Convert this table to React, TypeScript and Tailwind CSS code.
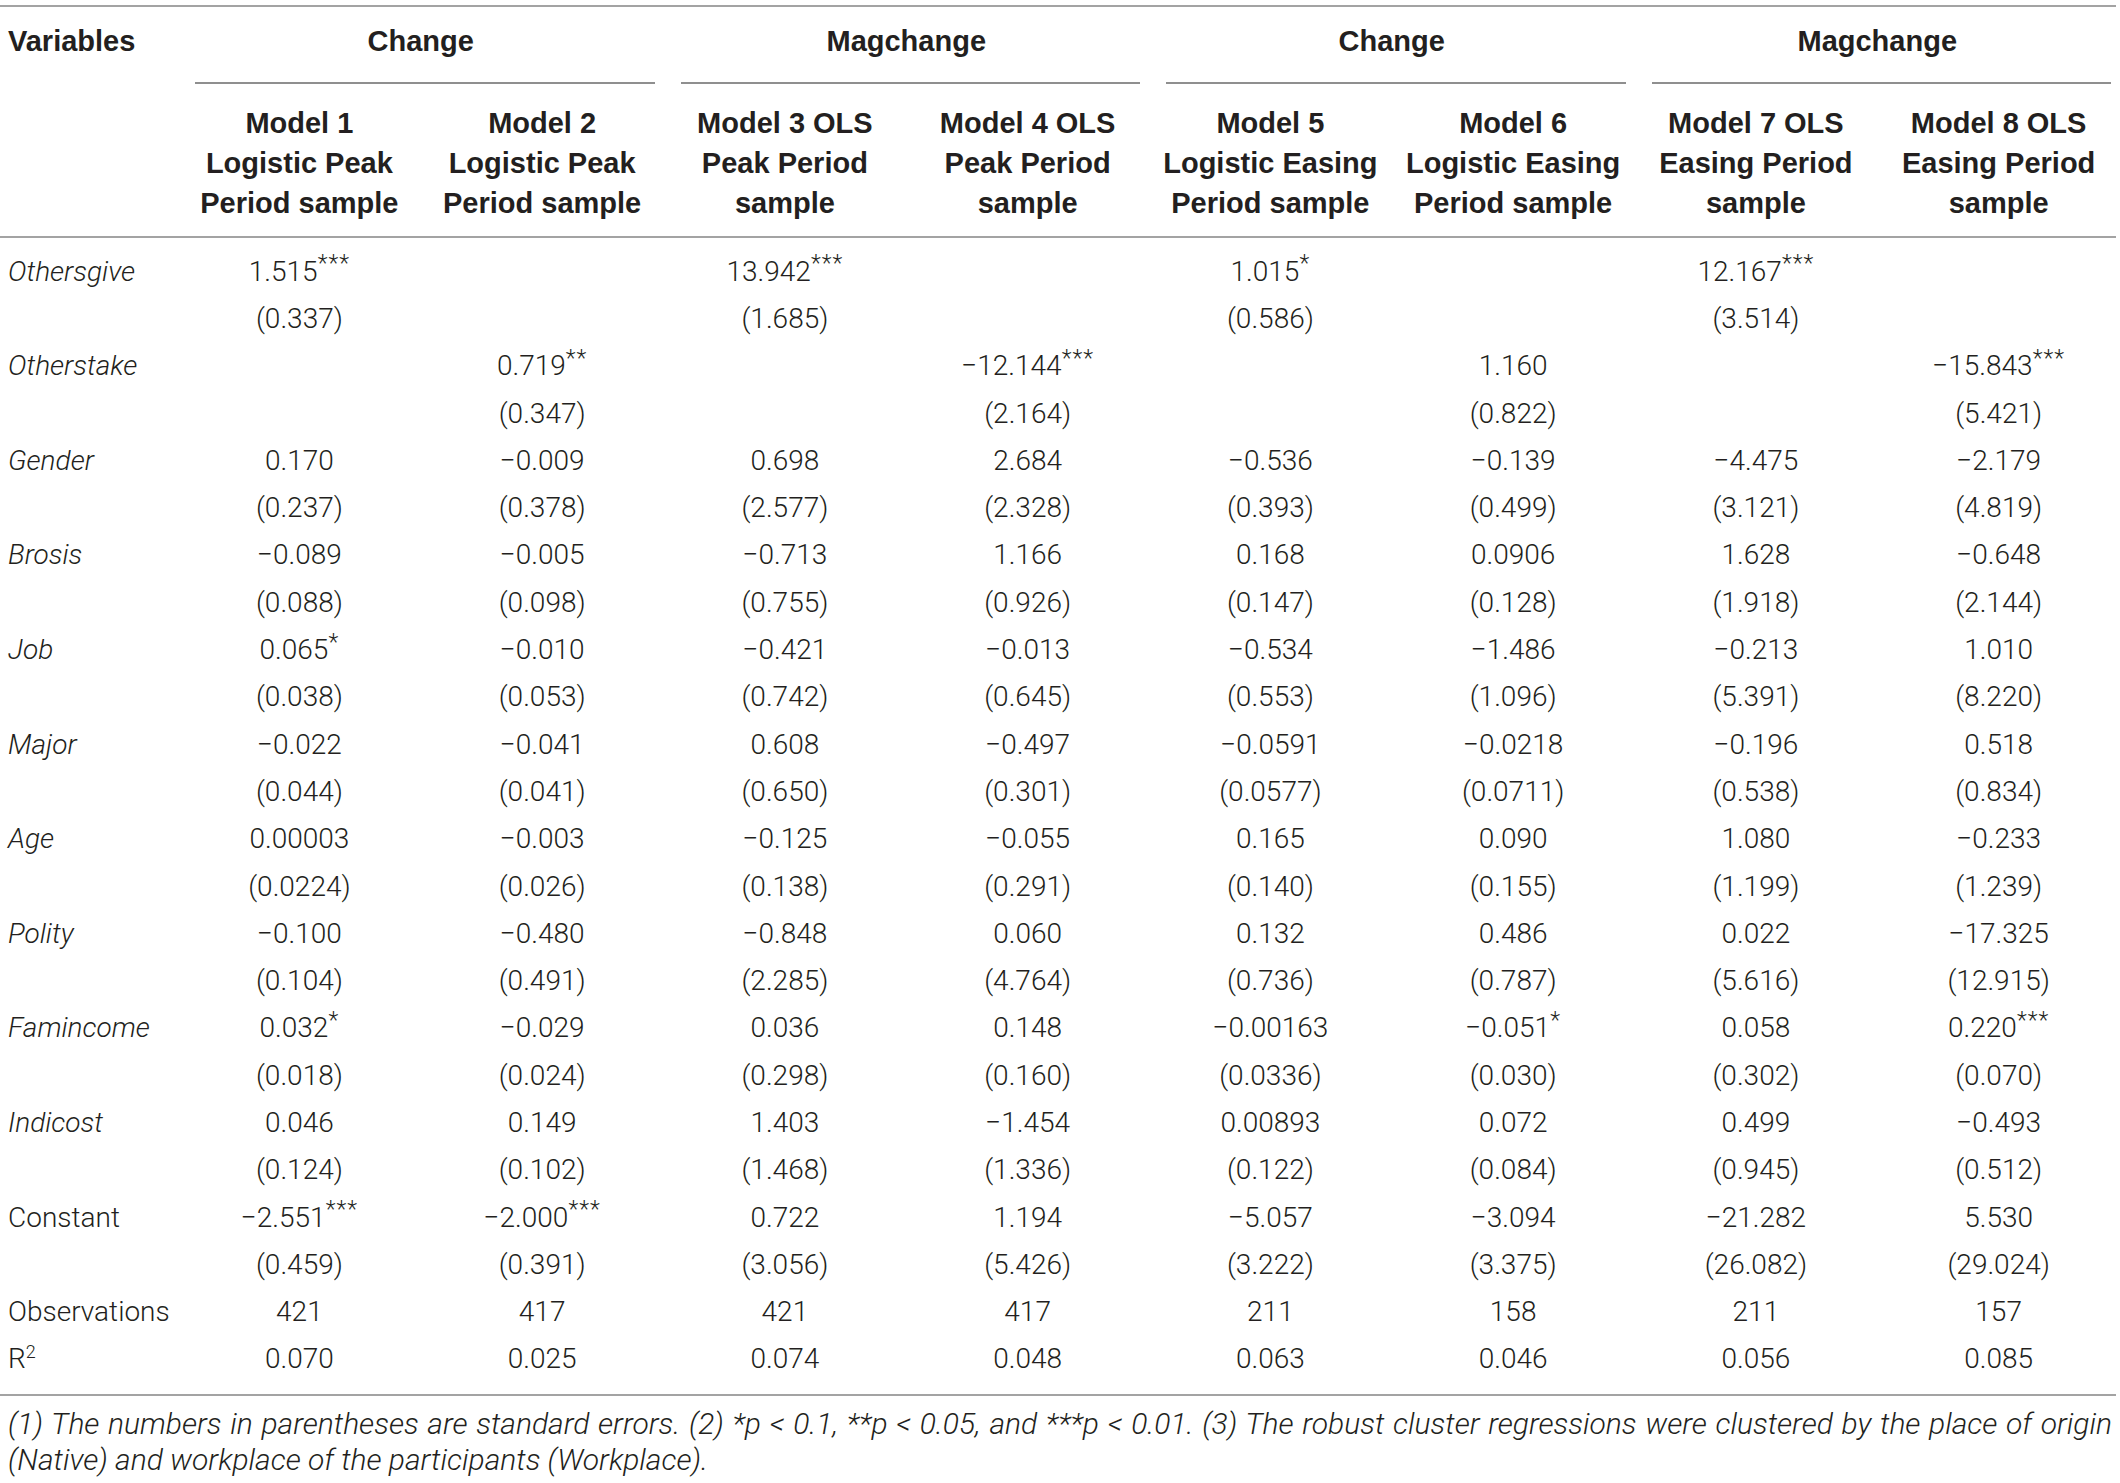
import React from "react";

const groups = ["Change", "Magchange", "Change", "Magchange"];

const models = [
  ["Model 1", "Logistic Peak", "Period sample"],
  ["Model 2", "Logistic Peak", "Period sample"],
  ["Model 3 OLS", "Peak Period", "sample"],
  ["Model 4 OLS", "Peak Period", "sample"],
  ["Model 5", "Logistic Easing", "Period sample"],
  ["Model 6", "Logistic Easing", "Period sample"],
  ["Model 7 OLS", "Easing Period", "sample"],
  ["Model 8 OLS", "Easing Period", "sample"],
];

type Row = { label: string; italic?: boolean; coef: string[]; se: string[] };

const rows: Row[] = [
  {
    label: "Othersgive",
    italic: true,
    coef: ["1.515***", "", "13.942***", "", "1.015*", "", "12.167***", ""],
    se: ["(0.337)", "", "(1.685)", "", "(0.586)", "", "(3.514)", ""],
  },
  {
    label: "Otherstake",
    italic: true,
    coef: ["", "0.719**", "", "−12.144***", "", "1.160", "", "−15.843***"],
    se: ["", "(0.347)", "", "(2.164)", "", "(0.822)", "", "(5.421)"],
  },
  {
    label: "Gender",
    italic: true,
    coef: ["0.170", "−0.009", "0.698", "2.684", "−0.536", "−0.139", "−4.475", "−2.179"],
    se: ["(0.237)", "(0.378)", "(2.577)", "(2.328)", "(0.393)", "(0.499)", "(3.121)", "(4.819)"],
  },
  {
    label: "Brosis",
    italic: true,
    coef: ["−0.089", "−0.005", "−0.713", "1.166", "0.168", "0.0906", "1.628", "−0.648"],
    se: ["(0.088)", "(0.098)", "(0.755)", "(0.926)", "(0.147)", "(0.128)", "(1.918)", "(2.144)"],
  },
  {
    label: "Job",
    italic: true,
    coef: ["0.065*", "−0.010", "−0.421", "−0.013", "−0.534", "−1.486", "−0.213", "1.010"],
    se: ["(0.038)", "(0.053)", "(0.742)", "(0.645)", "(0.553)", "(1.096)", "(5.391)", "(8.220)"],
  },
  {
    label: "Major",
    italic: true,
    coef: ["−0.022", "−0.041", "0.608", "−0.497", "−0.0591", "−0.0218", "−0.196", "0.518"],
    se: ["(0.044)", "(0.041)", "(0.650)", "(0.301)", "(0.0577)", "(0.0711)", "(0.538)", "(0.834)"],
  },
  {
    label: "Age",
    italic: true,
    coef: ["0.00003", "−0.003", "−0.125", "−0.055", "0.165", "0.090", "1.080", "−0.233"],
    se: ["(0.0224)", "(0.026)", "(0.138)", "(0.291)", "(0.140)", "(0.155)", "(1.199)", "(1.239)"],
  },
  {
    label: "Polity",
    italic: true,
    coef: ["−0.100", "−0.480", "−0.848", "0.060", "0.132", "0.486", "0.022", "−17.325"],
    se: ["(0.104)", "(0.491)", "(2.285)", "(4.764)", "(0.736)", "(0.787)", "(5.616)", "(12.915)"],
  },
  {
    label: "Famincome",
    italic: true,
    coef: ["0.032*", "−0.029", "0.036", "0.148", "−0.00163", "−0.051*", "0.058", "0.220***"],
    se: ["(0.018)", "(0.024)", "(0.298)", "(0.160)", "(0.0336)", "(0.030)", "(0.302)", "(0.070)"],
  },
  {
    label: "Indicost",
    italic: true,
    coef: ["0.046", "0.149", "1.403", "−1.454", "0.00893", "0.072", "0.499", "−0.493"],
    se: ["(0.124)", "(0.102)", "(1.468)", "(1.336)", "(0.122)", "(0.084)", "(0.945)", "(0.512)"],
  },
  {
    label: "Constant",
    coef: ["−2.551***", "−2.000***", "0.722", "1.194", "−5.057", "−3.094", "−21.282", "5.530"],
    se: ["(0.459)", "(0.391)", "(3.056)", "(5.426)", "(3.222)", "(3.375)", "(26.082)", "(29.024)"],
  },
];

const observations = ["421", "417", "421", "417", "211", "158", "211", "157"];
const rsq = ["0.070", "0.025", "0.074", "0.048", "0.063", "0.046", "0.056", "0.085"];

const grid = "grid grid-cols-[178px_repeat(8,1fr)]";

// split "1.515***" into number + stars so the stars can sit raised
const Value = ({ v }: { v: string }) => {
  const m = v.match(/^(.*?)(\*+)$/);
  if (!m) return <>{v}</>;
  return (
    <>
      {m[1]}
      <sup className="text-[23px] top-[-0.4em] tracking-[1px]">{m[2]}</sup>
    </>
  );
};

const DataLine = ({ label, italic, values }: { label: React.ReactNode; italic?: boolean; values: string[] }) => (
  <div className={`${grid} h-[47.3px] items-center`}>
    <div className={`pl-[8px] whitespace-nowrap ${italic ? "italic" : ""}`}>{label}</div>
    {values.map((v, i) => (
      <div key={i} className="text-center whitespace-nowrap">
        <Value v={v} />
      </div>
    ))}
  </div>
);

export default function App() {
  return (
    <div
      className="w-[2120px] h-[1483px] bg-white text-[#231f20] overflow-hidden"
      style={{ fontFamily: "Roboto, 'Liberation Sans', sans-serif" }}
    >
      <div className="h-[5px]" />
      <div className="border-t-2 border-[#a3a3a3] mr-[4px]" />

      {/* group headings */}
      <div className={`${grid} h-[68px] items-center font-bold text-[29px] leading-none font-['Liberation_Sans',sans-serif]`}>
        <div className="pl-[8px]">Variables</div>
        {groups.map((g, i) => (
          <div key={i} className="col-span-2 text-center">
            {g}
          </div>
        ))}
      </div>

      {/* group underlines */}
      <div className={`${grid} mt-[7px]`}>
        <div />
        {groups.map((g, i) => (
          <div key={i} className="col-span-2 pl-[17px] pr-[9px]">
            <div className="border-t-2 border-[#8f8f8f]" />
          </div>
        ))}
      </div>

      {/* model headings */}
      <div className={`${grid} pt-[19px] pb-[13px] font-bold text-[29px] leading-[40px] font-['Liberation_Sans',sans-serif]`}>
        <div />
        {models.map((m, i) => (
          <div key={i} className="text-center whitespace-nowrap">
            {m.map((line, j) => (
              <div key={j}>{line}</div>
            ))}
          </div>
        ))}
      </div>
      <div className="border-t-2 border-[#a3a3a3] mr-[4px]" />

      {/* body */}
      <div className="pt-[10px] pb-[11px] text-[28px] font-light">
        {rows.map((r) => (
          <React.Fragment key={r.label}>
            <DataLine label={r.label} italic={r.italic} values={r.coef} />
            <DataLine label="" values={r.se} />
          </React.Fragment>
        ))}
        <DataLine label="Observations" values={observations} />
        <DataLine
          label={
            <>
              R<sup className="text-[18px] top-[-0.6em]">2</sup>
            </>
          }
          values={rsq}
        />
      </div>
      <div className="border-t-2 border-[#a3a3a3] mr-[4px]" />

      {/* footnote, justified like the printed table */}
      <div className="pt-[10px] pl-[8px] pr-[8px] text-[30px] leading-[36px] italic font-light">
        <div className="whitespace-nowrap text-justify [text-align-last:justify]">
          (1) The numbers in parentheses are standard errors. (2) *p &lt; 0.1, **p &lt; 0.05, and ***p &lt; 0.01. (3) The
          robust cluster regressions were clustered by the place of origin
        </div>
        <div>(Native) and workplace of the participants (Workplace).</div>
      </div>
    </div>
  );
}
